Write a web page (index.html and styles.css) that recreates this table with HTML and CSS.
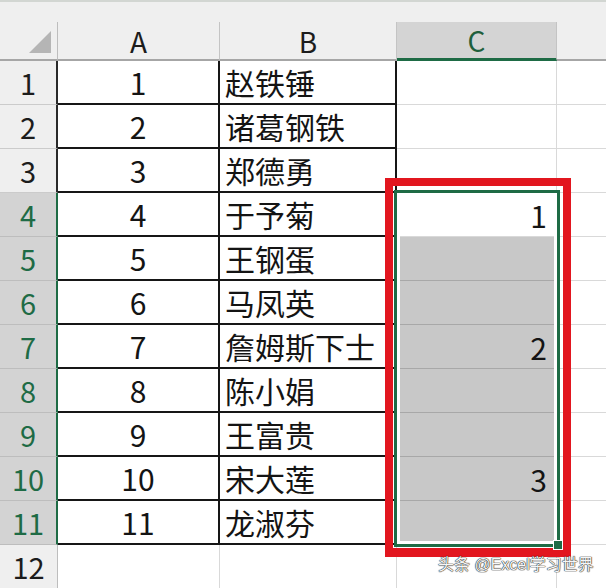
FILE: index.html
```html
<!DOCTYPE html>
<html lang="zh-CN">
<head>
<meta charset="utf-8">
<title>Excel</title>
<link rel="stylesheet" href="styles.css">
</head>
<body>
<div class="app">
  <div class="topband"></div>
  <div class="grid">
    <div class="corner"><svg class="corner-tri" width="22" height="22" viewBox="0 0 22 22"><polygon points="22,0 22,22 0,22" fill="#b5b5b5"/></svg></div>
    <div class="colhead">A</div>
    <div class="colhead">B</div>
    <div class="colhead sel">C</div>
    <div class="colhead last"></div>

    <div class="rh top">1</div><div class="ca">1</div><div class="cb">赵铁锤</div><div class="cc"></div><div class="cd"></div>
    <div class="rh top">2</div><div class="ca">2</div><div class="cb">诸葛钢铁</div><div class="cc"></div><div class="cd"></div>
    <div class="rh top">3</div><div class="ca">3</div><div class="cb">郑德勇</div><div class="cc"></div><div class="cd"></div>
    <div class="rh sel">4</div><div class="ca">4</div><div class="cb">于予菊</div><div class="cc">1</div><div class="cd"></div>
    <div class="rh sel">5</div><div class="ca">5</div><div class="cb">王钢蛋</div><div class="cc shade"></div><div class="cd"></div>
    <div class="rh sel">6</div><div class="ca">6</div><div class="cb">马凤英</div><div class="cc shade"></div><div class="cd"></div>
    <div class="rh sel">7</div><div class="ca">7</div><div class="cb">詹姆斯下士</div><div class="cc shade">2</div><div class="cd"></div>
    <div class="rh sel">8</div><div class="ca">8</div><div class="cb">陈小娟</div><div class="cc shade"></div><div class="cd"></div>
    <div class="rh sel">9</div><div class="ca">9</div><div class="cb">王富贵</div><div class="cc shade"></div><div class="cd"></div>
    <div class="rh sel">10</div><div class="ca">10</div><div class="cb">宋大莲</div><div class="cc shade">3</div><div class="cd"></div>
    <div class="rh sel">11</div><div class="ca">11</div><div class="cb">龙淑芬</div><div class="cc shade"></div><div class="cd"></div>
    <div class="rh">12</div><div class="ca plain"></div><div class="cb plain"></div><div class="cc"></div><div class="cd"></div>
  </div>
  <div class="red-box"></div>
  <div class="selection"></div>
  <div class="fill-handle"></div>
  <div class="watermark">头条 @Excel学习世界</div>
</div>
</body>
</html>
```

FILE: styles.css
```css
* { box-sizing: border-box; }
html, body { margin: 0; padding: 0; background: #ffffff; }
.app {
  position: relative;
  width: 606px;
  height: 588px;
  overflow: hidden;
  font-family: "Noto Sans CJK SC", "Noto Sans", sans-serif;
  color: #141414;
  background: #ffffff;
}
.topband {
  height: 22px;
  background: #efefef;
  border-top: 2px solid #d2d6d2;
}
.grid {
  display: grid;
  grid-template-columns: 58px 162px 177px 160px 49px;
  grid-template-rows: 39px repeat(12, 44px);
}
.grid > div {
  display: flex;
  align-items: center;
  font-size: 30px;
  line-height: 1;
}
.corner {
  position: relative;
  background: #efefef;
  border-right: 1px solid #bdbdbd;
  border-bottom: 2px solid #a6a6a6;
  padding: 9px 0 0 29px;
  align-items: flex-start !important;
}
.colhead {
  justify-content: center;
  background: #efefef;
  border-right: 1px solid #c4c4c4;
  border-bottom: 2px solid #a6a6a6;
  color: #1c1c1c;
  font-size: 28px !important;
}
.colhead.sel {
  background: #d4d4d4;
  color: #1f5f3c;
  border-bottom: 3px solid #1e6b45;
}
.colhead.last { border-right: none; }
.rh {
  justify-content: center;
  background: #efefef;
  border-right: 1px solid #bdbdbd;
  border-bottom: 1px solid #cbcbcb;
  color: #1c1c1c;
  font-size: 29px !important;
}
.rh.top { border-right: 2px solid #2a2a2a; }
.rh.sel {
  background: #d3d3d3;
  color: #1e6b45;
  border-right: 2px solid #1e6b45;
  border-bottom: 1px solid #bdbdbd;
}
.ca {
  justify-content: center;
  border-right: 2px solid #161616;
  border-bottom: 2px solid #161616;
}
.cb {
  padding-left: 5px;
  border-right: 2px solid #161616;
  border-bottom: 2px solid #161616;
}
.ca.plain, .cb.plain {
  border-right: 1px solid #d9d9d9;
  border-bottom: none;
}
.cc {
  justify-content: flex-end;
  padding-right: 9px;
  border-right: 1px solid #d9d9d9;
  border-bottom: 1px solid #d9d9d9;
}
.cc.shade {
  background: #c8c8c8;
  border-bottom: 1px solid #a8a8a8;
}
.cd {
  border-bottom: 1px solid #d9d9d9;
}
.red-box {
  position: absolute;
  left: 385px;
  top: 178px;
  width: 186px;
  height: 379px;
  border: 8px solid #e2161f;
  border-bottom-width: 9px;
}
.selection {
  position: absolute;
  left: 394px;
  top: 190px;
  width: 166px;
  height: 357px;
  border: 3px solid #1e6b45;
  box-shadow: inset 0 0 0 3px #ffffff;
}
.fill-handle {
  position: absolute;
  left: 553px;
  top: 540px;
  width: 10px;
  height: 10px;
  background: #1e6b45;
  border: 1px solid #ffffff;
}
.watermark {
  position: absolute;
  left: 438px;
  top: 555px;
  font-family: "Liberation Sans", "Noto Sans CJK SC", sans-serif;
  font-size: 16px;
  line-height: 20px;
  white-space: nowrap;
  color: #f6f6f6;
  text-shadow: 0 0 1px #2a2a2a, 0 0 1px #2a2a2a, 0 0 1px #2a2a2a;
}
```
